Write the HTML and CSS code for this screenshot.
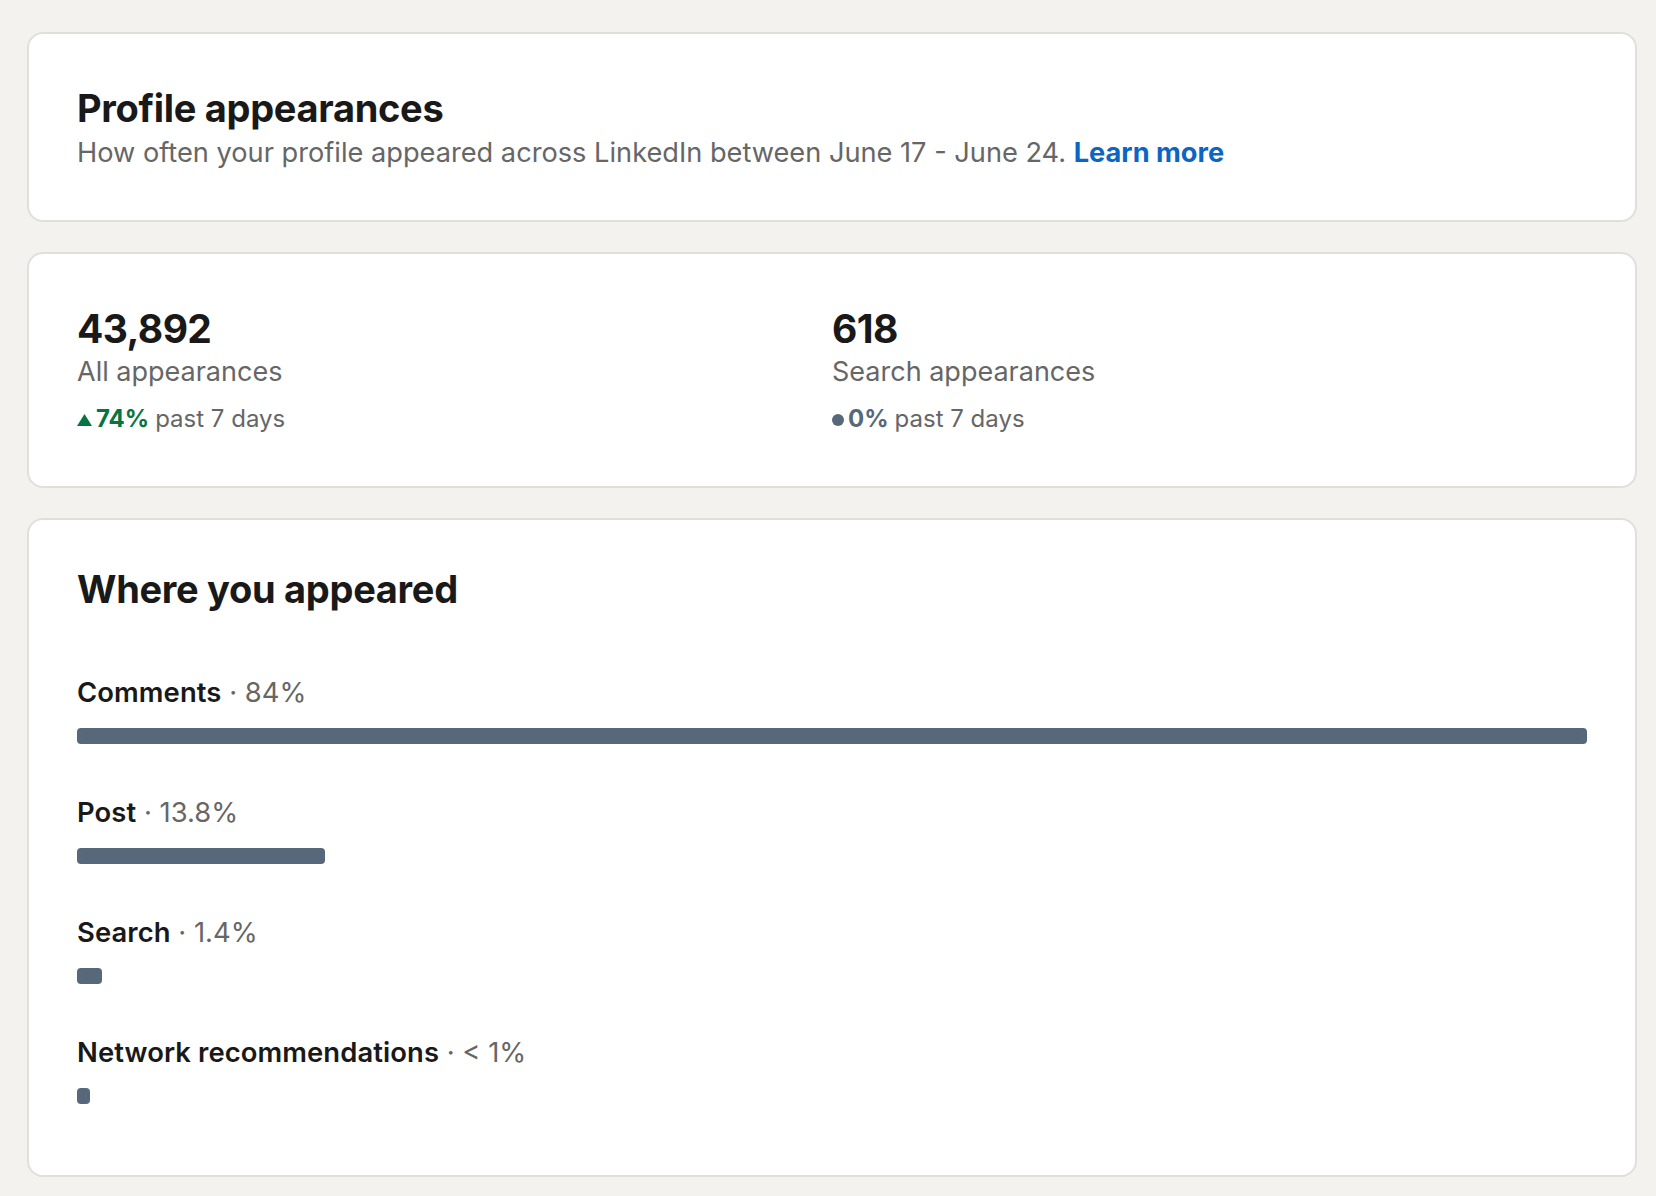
FILE: index.html
```html
<!DOCTYPE html>
<html lang="en">
<head>
<meta charset="utf-8">
<title>Profile appearances</title>
<link rel="stylesheet" href="styles.css">
</head>
<body>
<main class="page">
  <section class="card intro">
    <h1 class="card-title">Profile appearances</h1>
    <p class="subtitle">How often your profile appeared across LinkedIn between June 17 - June 24. <a class="link" href="#">Learn more</a></p>
  </section>

  <section class="card stats">
    <div class="stat">
      <div class="stat-value">43,892</div>
      <div class="stat-label">All appearances</div>
      <div class="trend">
        <svg class="trend-icon" width="15" height="12" viewBox="0 0 15 12" aria-hidden="true"><polygon points="7.5,0 15,12 0,12" fill="#057642"/></svg>
        <span class="trend-up">74%</span>
        <span class="trend-text">past 7 days</span>
      </div>
    </div>
    <div class="stat">
      <div class="stat-value">618</div>
      <div class="stat-label">Search appearances</div>
      <div class="trend">
        <span class="trend-dot"></span>
        <span class="trend-flat">0%</span>
        <span class="trend-text">past 7 days</span>
      </div>
    </div>
  </section>

  <section class="card where">
    <h2 class="card-title where-title">Where you appeared</h2>
    <ul class="sources">
      <li class="source">
        <div class="source-label"><span class="source-name">Comments</span><span class="source-pct"> · 84%</span></div>
        <div class="bar" style="width:100%"></div>
      </li>
      <li class="source">
        <div class="source-label"><span class="source-name">Post</span><span class="source-pct"> · 13.8%</span></div>
        <div class="bar" style="width:16.43%"></div>
      </li>
      <li class="source">
        <div class="source-label"><span class="source-name">Search</span><span class="source-pct"> · 1.4%</span></div>
        <div class="bar" style="width:25px"></div>
      </li>
      <li class="source">
        <div class="source-label"><span class="source-name">Network recommendations</span><span class="source-pct"> · &lt; 1%</span></div>
        <div class="bar" style="width:13px"></div>
      </li>
    </ul>
  </section>
</main>
</body>
</html>
```

FILE: styles.css
```css
* {
  box-sizing: border-box;
}

html, body {
  margin: 0;
  padding: 0;
  background: #f3f2ef;
}

body {
  font-family: "Inter", "Roboto", "Liberation Sans", sans-serif;
  color: #191919;
  -webkit-font-smoothing: antialiased;
}

.page {
  width: 1610px;
  margin-left: 27px;
  padding-top: 32px;
  padding-bottom: 19px;
  display: flex;
  flex-direction: column;
  gap: 30px;
}

.card {
  background: #ffffff;
  border: 2px solid #e0dfdb;
  border-radius: 16px;
  padding: 48px;
}

.card-title {
  margin: 0;
  font-size: 38px;
  line-height: 52px;
  font-weight: 700;
  letter-spacing: -0.3px;
  color: #191919;
}

.subtitle {
  margin: 0;
  font-size: 27.2px;
  line-height: 38px;
  font-weight: 400;
  color: #666666;
}

.link {
  color: #0a66c2;
  font-weight: 700;
  text-decoration: none;
}

/* stats */
.stats {
  display: grid;
  grid-template-columns: 1fr 1fr;
}

.stat-value {
  font-size: 39px;
  line-height: 54px;
  font-weight: 700;
  letter-spacing: -0.6px;
  color: #191919;
}

.stat-label {
  font-size: 27px;
  line-height: 32px;
  color: #666666;
}

.trend {
  margin-top: 12px;
  display: flex;
  align-items: baseline;
  font-size: 24px;
  line-height: 38px;
  color: #666666;
}

.trend-icon {
  align-self: center;
  margin-right: 4px;
  position: relative;
  top: 1px;
}

.trend-up {
  color: #057642;
  font-weight: 700;
  margin-right: 6px;
}

.trend-dot {
  width: 12px;
  height: 12px;
  border-radius: 50%;
  background: #56687a;
  align-self: center;
  margin-right: 4px;
  position: relative;
  top: 1px;
}

.trend-flat {
  color: #56687a;
  font-weight: 700;
  margin-right: 6px;
}

/* where */
.where {
  padding-bottom: 71px;
}

.where-title {
  line-height: 42px;
}

.sources {
  list-style: none;
  margin: 64px 0 0;
  padding: 0;
  display: flex;
  flex-direction: column;
  gap: 50px;
}

.source {
  display: flex;
  flex-direction: column;
  gap: 18px;
}

.source-label {
  font-size: 27.4px;
  line-height: 36px;
  height: 36px;
}

.source-name {
  font-weight: 600;
  letter-spacing: 0.1px;
  color: #191919;
}

.source-pct {
  color: #666666;
}

.bar {
  height: 16px;
  background: #56687a;
  border-radius: 4px;
}
```
